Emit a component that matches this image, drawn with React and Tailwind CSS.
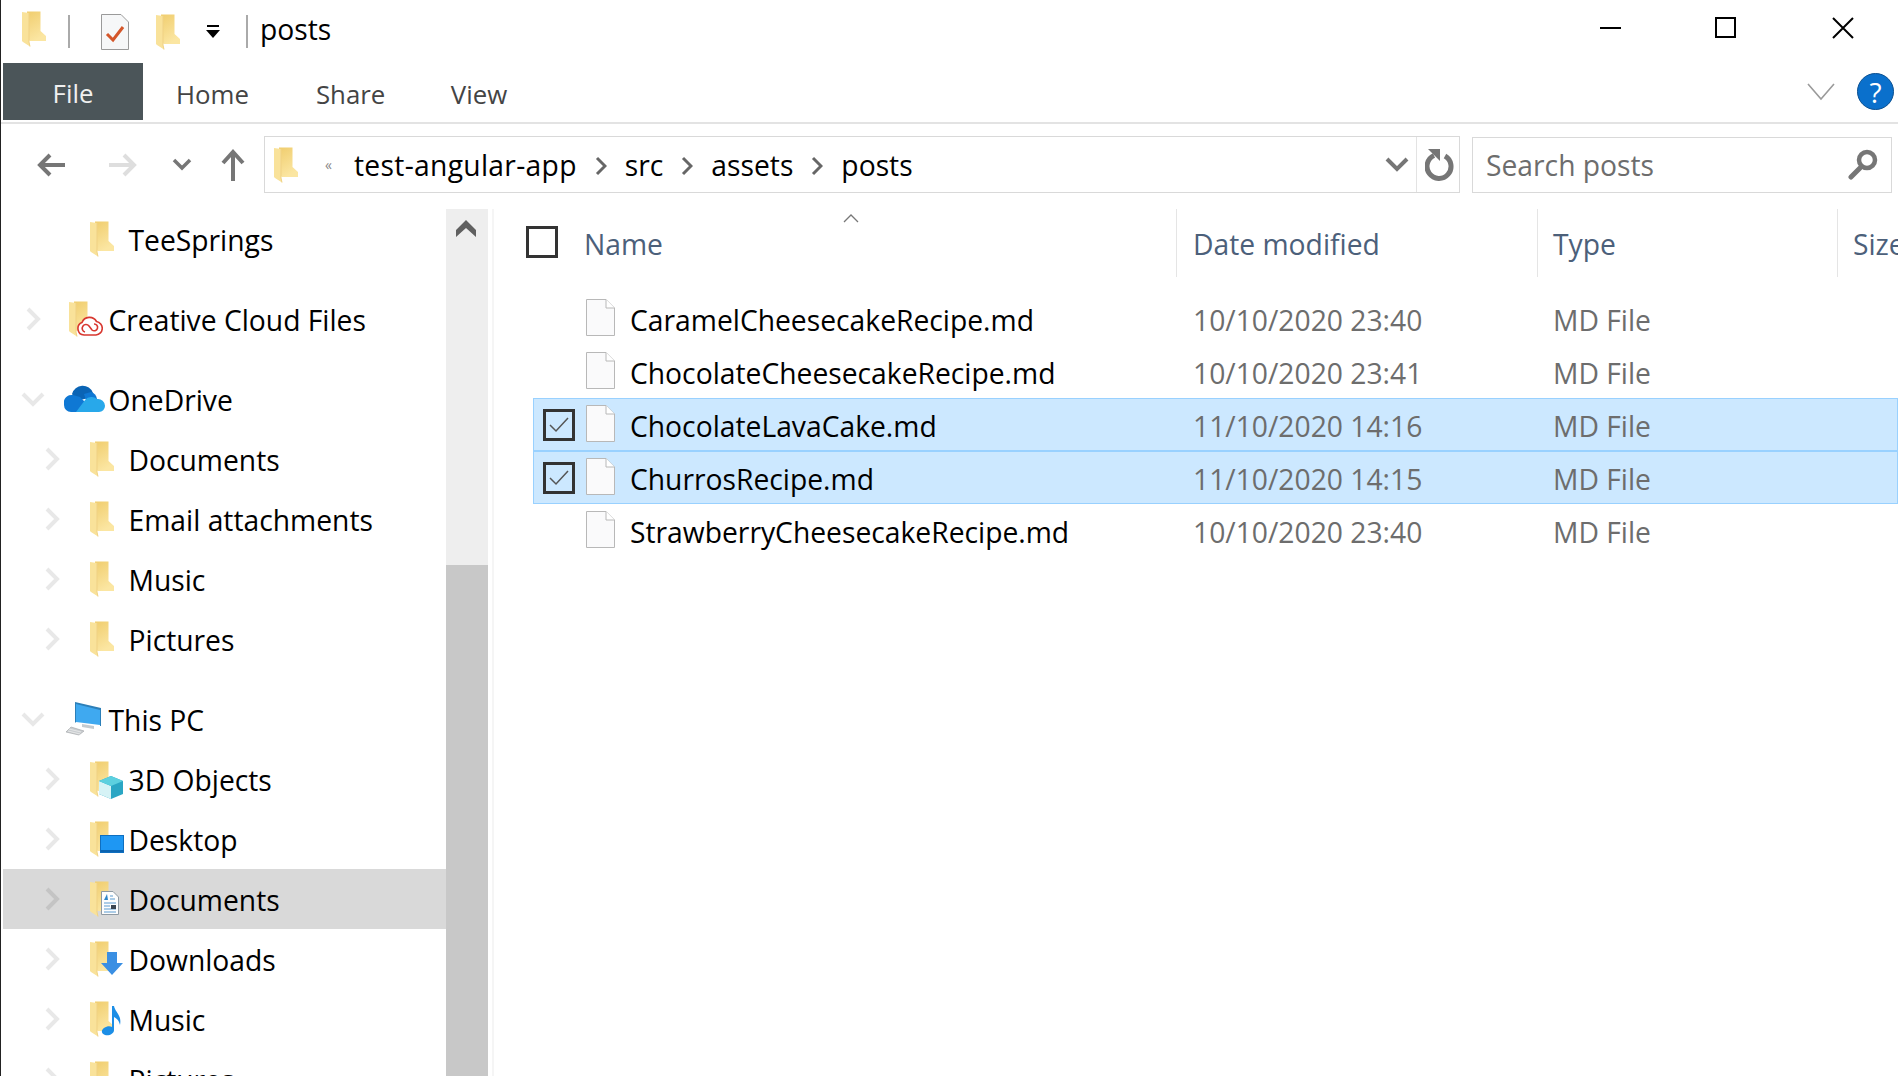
import React from "react";

function Folder({ className = "" }) {
  return (
    <svg width="24" height="36" viewBox="0 0 24 36" className={className}>
      <defs>
        <linearGradient id="fg" x1="0" y1="0" x2="0.4" y2="1">
          <stop offset="0" stopColor="#f0cd6e" />
          <stop offset="1" stopColor="#fbe6a2" />
        </linearGradient>
      </defs>
      <path d="M5 0.5 H18.5 V20 L24 25 V30 H8 L5 28 Z" fill="url(#fg)" />
      <path d="M0 1 L7 2 V31 L8 35.5 L1 31 L0 30 Z" fill="#f9e29a" />
      <path d="M7 2 V31 L8 35.5" fill="none" stroke="#efd184" strokeWidth="1" />
    </svg>
  );
}

function Chev({ dir = "right", dim = false }) {
  const color = dim ? "#c4c4c4" : "#e8e8e8";
  return dir === "right" ? (
    <svg width="16" height="24" viewBox="0 0 16 24">
      <path d="M3 2 L13 12 L3 22" fill="none" stroke={color} strokeWidth="4" />
    </svg>
  ) : (
    <svg width="24" height="16" viewBox="0 0 24 16">
      <path d="M2 3 L12 13 L22 3" fill="none" stroke={color} strokeWidth="4" />
    </svg>
  );
}

function FolderCC() {
  return (
    <div className="relative w-[34px] h-[36px] ml-[5px]">
      <Folder />
      <svg width="26" height="20" viewBox="0 0 26 20" className="absolute left-[8px] top-[15px]">
        <path d="M7 19 A6.5 6.5 0 0 1 5 6.5 A8 8 0 0 1 19.5 5.5 A6.8 6.8 0 0 1 19 19 Z" fill="#fff" stroke="#d8372f" strokeWidth="1.6" />
        <path d="M8 16 A3.8 3.8 0 1 1 12 10 L15 14 A3.4 3.4 0 1 0 17 8" fill="none" stroke="#d8372f" strokeWidth="1.6" />
      </svg>
    </div>
  );
}

function OneDrive() {
  return (
    <svg width="41" height="28" viewBox="0 0 41 28">
      <path d="M8 9 A11 11 0 0 1 29 8 L29 12 L12 16 Z" fill="#0a64b5" />
      <path d="M27 7 A9 9 0 0 1 33 14 L22 15 L20 9 Z" fill="#0f78d4" />
      <path d="M0 20 A8 8 0 0 1 9 10 L16 12 L26 22 L14 27 L7 27 A7 7 0 0 1 0 20 Z" fill="#0f78d4" />
      <path d="M12 27 L21 15 A8 8 0 0 1 27 12 A8 8 0 0 1 33 14 A7 7 0 0 1 41 21 A6 6 0 0 1 35 27 Z" fill="#28a8ea" />
    </svg>
  );
}

function PC() {
  return (
    <svg width="38" height="34" viewBox="0 0 38 34">
      <path d="M12 1 L36 7 V23 L12 20 Z" fill="#3fa9f0" />
      <path d="M11 0 L37 6 V24 L36 24 V8 L12 2 V21 L11 20 Z" fill="#2c7fb8" />
      <path d="M18 22 L30 24 V27 L18 25 Z" fill="#c4cbd0" />
      <path d="M7 25 L2 30 L15 33 L20 29 Z" fill="#c9cdd0" stroke="#a7abae" strokeWidth="0.7" />
      <path d="M5 27 L17 30 M4 29 L16 32" stroke="#eee" strokeWidth="0.8" />
    </svg>
  );
}

function Overlay({ children }) {
  return (
    <div className="relative w-[34px] h-[36px]">
      <Folder />
      {children}
    </div>
  );
}

function Folder3D() {
  return (
    <Overlay>
      <svg width="24" height="24" viewBox="0 0 24 24" className="absolute left-[9px] top-[15px]">
        <path d="M12 0 L24 5 V18 L12 23 L0 18 V5 Z" fill="#2aa6c4" />
        <path d="M0 5 L12 10 V23 L0 18 Z" fill="#d6f3f6" />
        <path d="M12 0 L24 5 L12 10 L0 5 Z" fill="#5cd0df" />
      </svg>
    </Overlay>
  );
}

function FolderDesktop() {
  return (
    <Overlay>
      <svg width="24" height="18" viewBox="0 0 24 18" className="absolute left-[10px] top-[14px]">
        <rect x="0.5" y="0.5" width="23" height="17" fill="#1e97f3" stroke="#0f6fc0" />
        <rect x="0.5" y="15" width="23" height="2" fill="#0b63b0" />
      </svg>
    </Overlay>
  );
}

function FolderDocs() {
  return (
    <Overlay>
      <svg width="18" height="24" viewBox="0 0 18 24" className="absolute left-[11px] top-[10px]">
        <path d="M0.5 0.5 H12 L17.5 6 V23.5 H0.5 Z" fill="#fdfdfd" stroke="#8f9aa3" />
        <path d="M3 12 H15 M3 15 H9 M3 18 H15 M3 21 H15 M9 5 H12 M9 8 H14" stroke="#5a9bd0" strokeWidth="1" />
        <path d="M3 9 L6 3 L7 9 Z" fill="#2f86c9" />
        <rect x="10" y="14" width="5" height="4" fill="#3b4652" />
      </svg>
    </Overlay>
  );
}

function FolderDown() {
  return (
    <Overlay>
      <svg width="22" height="24" viewBox="0 0 22 24" className="absolute left-[11px] top-[11px]">
        <path d="M6 0 H16 V11 H22 L11 23 L0 11 H6 Z" fill="#3a8fe3" />
      </svg>
    </Overlay>
  );
}

function FolderMusic() {
  return (
    <Overlay>
      <svg width="22" height="30" viewBox="0 0 22 30" className="absolute left-[11px] top-[5px]">
        <path d="M11 0 H13 C14 6 21 9 19 19 C18 14 15 12 13 11 V24 C13 28 8 30 4 29 C0 28 -0 24 3 22 C6 20 9 20 11 21 Z" fill="#1c8ee6" />
      </svg>
    </Overlay>
  );
}

function NavRow({ level = 2, icon, label, chevron = "right", active = false }) {
  return (
    <div className={`flex items-center h-[60px] ml-[2px] ${active ? "bg-[#d9d9d9]" : ""}`}>
      <div className={`flex items-center justify-center shrink-0 ${level === 1 ? "w-[64px] pr-[4px]" : "w-[85px] pl-[12px]"}`}>
        {chevron ? <Chev dir={chevron} dim={active} /> : null}
      </div>
      <div className={`flex items-center shrink-0 ${level === 1 ? "w-[41.5px] -ml-[3px] mr-[3px]" : "w-[38.5px] ml-[2px]"}`}>{icon}</div>
      <span className="mt-[3px] text-[28.25px] leading-none text-black whitespace-nowrap">{label}</span>
    </div>
  );
}

function FileIcon() {
  return (
    <svg width="29" height="37" viewBox="0 0 29 37">
      <path d="M0.5 0.5 H20 L28.5 9 V36.5 H0.5 Z" fill="#fafafb" stroke="#b8b8b8" />
      <path d="M20 0.5 V9 H28.5" fill="#fff" stroke="#b8b8b8" />
    </svg>
  );
}

function FileRow({ name, date, selected }) {
  return (
    <div className={`flex items-center h-[53px] ml-[39px] border ${selected ? "bg-[#cce8ff] border-[#99d1ff]" : "border-transparent"}`}>
      <div className="w-[52px] shrink-0 pl-[9px] flex items-center">
        {selected ? (
          <div className="w-[32px] h-[32px] border-[3px] border-[#333] flex items-center justify-center">
            <svg width="22" height="18" viewBox="0 0 22 18">
              <path d="M2 9 L8 15 L20 2" fill="none" stroke="#555" strokeWidth="1.5" />
            </svg>
          </div>
        ) : null}
      </div>
      <div className="w-[44px] shrink-0 flex items-center -mt-[2px]">
        <FileIcon />
      </div>
      <span className="mt-[4px] w-[563px] shrink-0 text-[28.25px] leading-none text-black whitespace-nowrap">{name}</span>
      <span className="mt-[4px] w-[360px] shrink-0 text-[28.25px] leading-none text-[#6d6d6d] whitespace-nowrap">{date}</span>
      <span className="mt-[4px] text-[28.25px] leading-none text-[#6d6d6d] whitespace-nowrap">MD File</span>
    </div>
  );
}

function HeaderCol({ label, className }) {
  return (
    <div className={`h-[68px] flex items-center border-r border-[#e5e5e5] shrink-0 ${className}`}>
      <span className="text-[28.25px] leading-none text-[#4c607a] whitespace-nowrap">{label}</span>
    </div>
  );
}

function Crumb() {
  return (
    <svg width="12" height="20" viewBox="0 0 12 20" className="shrink-0">
      <path d="M2 2 L10 10 L2 18" fill="none" stroke="#666" strokeWidth="3" />
    </svg>
  );
}

export default function App() {
  return (
    <div className="w-[1898px] h-[1076px] overflow-hidden bg-white border-l border-[#222] font-['Open_Sans','Noto_Sans',sans-serif]">
      {/* Title bar */}
      <div className="h-[63px] flex items-center">
        <Folder className="ml-[21px] -mt-[6px]" />
        <div className="w-[2px] h-[33px] bg-[#aaa] ml-[22px]" />
        <svg width="28" height="36" viewBox="0 0 28 36" className="ml-[31px]">
          <path d="M0.5 0.5 H20 L27.5 8 V35.5 H0.5 Z" fill="#f6f7f8" stroke="#9a9a9a" />
          <path d="M6 20 L12 26 L22 13" fill="none" stroke="#d4562a" strokeWidth="3" />
        </svg>
        <Folder className="ml-[27px]" />
        <svg width="16" height="14" viewBox="0 0 16 14" className="ml-[25px]">
          <rect x="2" y="0" width="12" height="2" fill="#000" />
          <path d="M1 5 H15 L8 13 Z" fill="#000" />
        </svg>
        <div className="w-[2px] h-[33px] bg-[#aaa] ml-[25px]" />
        <span className="ml-[12px] -mt-[5px] text-[28.25px] leading-none text-black">posts</span>
        <div className="ml-auto flex items-center mr-[44px] -mt-[8px]">
          <div className="w-[21px] h-[2px] bg-black translate-x-[1px]" />
          <div className="ml-[95px] w-[21px] h-[21px] border-[2px] border-black" />
          <svg width="22" height="22" viewBox="0 0 22 22" className="ml-[96px]">
            <path d="M1 1 L21 21 M21 1 L1 21" stroke="#000" strokeWidth="2" />
          </svg>
        </div>
      </div>

      {/* Ribbon tabs */}
      <div className="h-[61px] pb-[2px] border-b-2 border-[#e3e3e3] flex items-start">
        <div className="ml-[2px] w-[140px] h-[57px] bg-[#4b5559] flex items-center justify-center pt-[4px] text-[25.8px] leading-none text-[#f0f0f0]">File</div>
        <div className="h-[57px] flex items-center pt-[7px] text-[25.8px] leading-none text-[#444]">
          <span className="ml-[33px]">Home</span>
          <span className="ml-[67px]">Share</span>
          <span className="ml-[65.5px]">View</span>
        </div>
        <div className="ml-auto h-[57px] flex items-center">
          <svg width="28" height="18" viewBox="0 0 28 18">
            <path d="M1 1 L14 16 L27 1" fill="none" stroke="#9a9a9a" strokeWidth="1.6" />
          </svg>
          <div className="ml-[22px] mr-[4px] w-[37px] h-[37px] rounded-full bg-[#0a70cc] border border-[#0a4f90] flex items-center justify-center text-white text-[28px] leading-none">?</div>
        </div>
      </div>

      {/* Address row */}
      <div className="h-[85px] flex items-center pb-[4px]">
        <svg width="32" height="26" viewBox="0 0 32 26" className="ml-[34px]">
          <path d="M30 13 H5 M15 3 L5 13 L15 23" fill="none" stroke="#767676" strokeWidth="4" />
        </svg>
        <svg width="32" height="26" viewBox="0 0 32 26" className="ml-[40px]">
          <path d="M2 13 H27 M17 3 L27 13 L17 23" fill="none" stroke="#dedede" strokeWidth="4" />
        </svg>
        <svg width="20" height="14" viewBox="0 0 20 14" className="ml-[33px]">
          <path d="M2 2 L10 10 L18 2" fill="none" stroke="#767676" strokeWidth="3.5" />
        </svg>
        <svg width="24" height="32" viewBox="0 0 24 32" className="ml-[29px]">
          <path d="M12 32 V4 M2 14 L12 3 L22 14" fill="none" stroke="#767676" strokeWidth="4" />
        </svg>
        <div className="ml-[19px] w-[1196px] h-[57px] border border-[#d9d9d9] flex items-center">
          <Folder className="ml-[9px] shrink-0" />
          <span className="ml-[27px] text-[#888] text-[14px] leading-none w-[29px]">«</span>
          <div className="flex items-center pt-[2px] text-[28.25px] leading-none text-black whitespace-nowrap">
            <span className="tracking-[0.3px]">test-angular-app</span>
            <div className="mx-[18px] flex"><Crumb /></div>
            <span>src</span>
            <div className="mx-[18px] flex"><Crumb /></div>
            <span>assets</span>
            <div className="mx-[18px] flex"><Crumb /></div>
            <span>posts</span>
          </div>
          <div className="ml-auto flex items-center h-full">
            <svg width="24" height="16" viewBox="0 0 24 16">
              <path d="M2 2 L12 12 L22 2" fill="none" stroke="#767676" strokeWidth="4" />
            </svg>
            <div className="ml-[7px] w-[43px] h-full border-l border-[#e3e3e3] flex items-center justify-center pl-[3px]">
              <svg width="30" height="32" viewBox="0 0 30 32">
                <path d="M20 7 A12 12 0 1 1 9 6.5" fill="none" stroke="#767676" strokeWidth="5" />
                <path d="M3 0 H15 V12 Z" fill="#767676" />
              </svg>
            </div>
          </div>
        </div>
        <div className="ml-[12px] w-[420px] h-[56px] border border-[#d9d9d9] flex items-center">
          <span className="ml-[13px] mt-[2px] text-[28.25px] leading-none text-[#6d6d6d]">Search posts</span>
          <svg width="30" height="32" viewBox="0 0 30 32" className="ml-auto mr-[13px]">
            <circle cx="19" cy="11" r="8" fill="none" stroke="#767676" strokeWidth="4.5" />
            <path d="M13 18 L3 28" stroke="#767676" strokeWidth="5" strokeLinecap="round" />
          </svg>
        </div>
      </div>

      {/* Body */}
      <div className="flex h-[867px]">
        <div className="w-[445px] shrink-0 overflow-hidden">
          <NavRow icon={<Folder />} label="TeeSprings" chevron={null} />
          <div className="h-[20px]" />
          <NavRow level={1} icon={<FolderCC />} label="Creative Cloud Files" />
          <div className="h-[20px]" />
          <NavRow level={1} icon={<OneDrive />} label="OneDrive" chevron="down" />
          <NavRow icon={<Folder />} label="Documents" />
          <NavRow icon={<Folder />} label="Email attachments" />
          <NavRow icon={<Folder />} label="Music" />
          <NavRow icon={<Folder />} label="Pictures" />
          <div className="h-[20px]" />
          <NavRow level={1} icon={<PC />} label="This PC" chevron="down" />
          <NavRow icon={<Folder3D />} label="3D Objects" />
          <NavRow icon={<FolderDesktop />} label="Desktop" />
          <NavRow icon={<FolderDocs />} label="Documents" active />
          <NavRow icon={<FolderDown />} label="Downloads" />
          <NavRow icon={<FolderMusic />} label="Music" />
          <NavRow icon={<Folder />} label="Pictures" />
        </div>
        <div className="w-[42px] shrink-0 bg-[#eeeeee] flex flex-col">
          <div className="h-[356px] flex justify-center pt-[11px] pr-[2px]">
            <svg width="20" height="18" viewBox="0 0 20 18">
              <path d="M10 0 L20 10 V17 L10 8 L0 17 V10 Z" fill="#606060" />
            </svg>
          </div>
          <div className="flex-1 bg-[#c8c8c8]" />
        </div>
        <div className="w-[4px] shrink-0" />
        <div className="flex-1 border-l-2 border-[#f5f5f5] min-w-0">
          <div className="relative flex items-start h-[83px]">
            <div className="w-[683px] h-[68px] shrink-0 border-r border-[#e5e5e5] flex items-center pt-[3px]">
              <div className="ml-[32px] -mt-[5px] w-[32px] h-[32px] border-[3px] border-[#333] shrink-0" />
              <span className="ml-[26px] text-[28.25px] leading-none text-[#4c607a]">Name</span>
            </div>
            <HeaderCol label="Date modified" className="w-[361px] pl-[16px] pt-[3px]" />
            <HeaderCol label="Type" className="w-[300px] pl-[15px] pt-[3px]" />
            <div className="h-[68px] pl-[15px] pt-[3px] flex items-center">
              <span className="text-[28.25px] leading-none text-[#4c607a]">Size</span>
            </div>
            <svg width="16" height="9" viewBox="0 0 16 9" className="absolute left-[349px] top-[5px]">
              <path d="M1 8 L8 1 L15 8" fill="none" stroke="#777" strokeWidth="1.3" />
            </svg>
          </div>
          <FileRow name="CaramelCheesecakeRecipe.md" date="10/10/2020 23:40" />
          <FileRow name="ChocolateCheesecakeRecipe.md" date="10/10/2020 23:41" />
          <FileRow name="ChocolateLavaCake.md" date="11/10/2020 14:16" selected />
          <FileRow name="ChurrosRecipe.md" date="11/10/2020 14:15" selected />
          <FileRow name="StrawberryCheesecakeRecipe.md" date="10/10/2020 23:40" />
        </div>
      </div>
    </div>
  );
}
